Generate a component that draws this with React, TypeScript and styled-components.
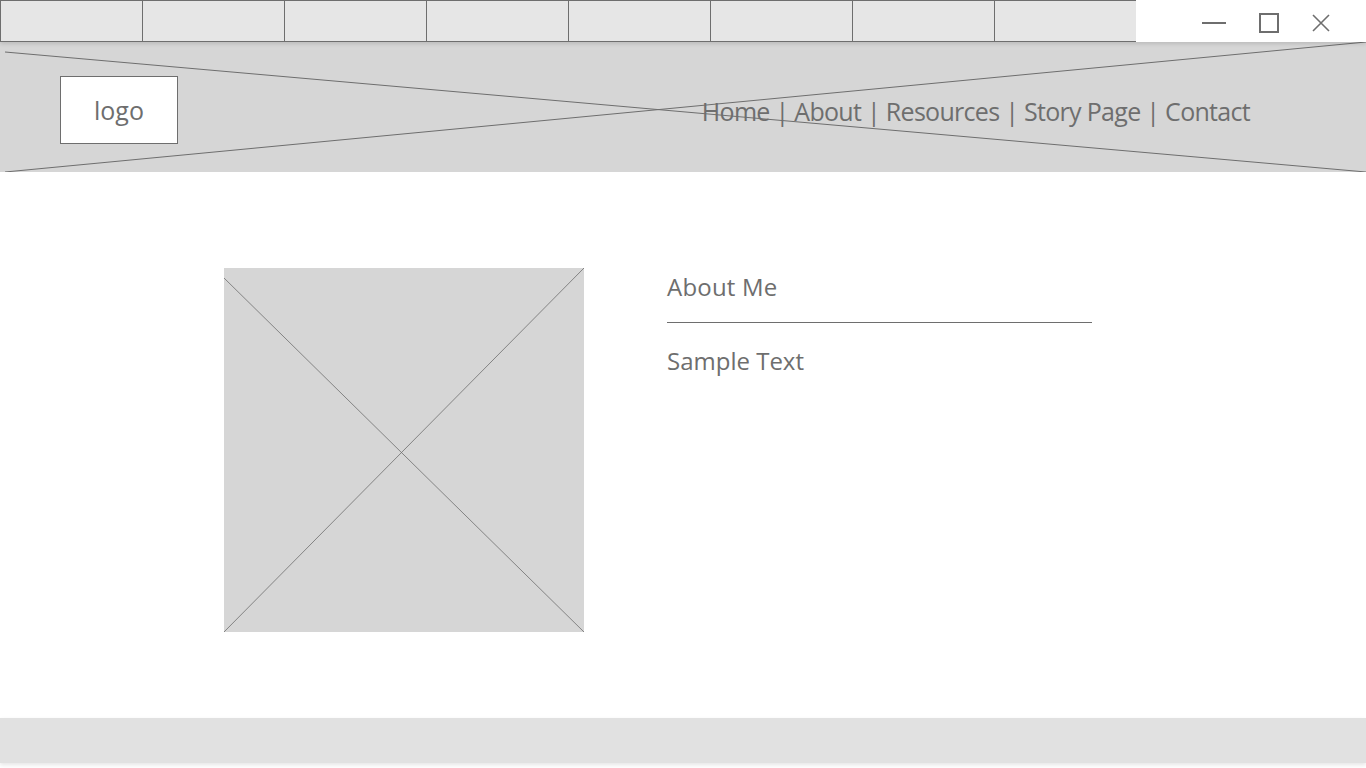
import styled, { createGlobalStyle } from 'styled-components'

const GlobalStyle = createGlobalStyle`
    html, body {
        margin: 0;
        padding: 0;
        background: #ffffff;
        font-family: "Open Sans", "Noto Sans", Arial, sans-serif;
        color: #6e6e6e;
    }
`;

const Page = styled.div`
    width: 1366px;
    height: 768px;
    display: flex;
    flex-direction: column;
    overflow: hidden;
    background: #ffffff;
`;

const TopBar = styled.div`
    height: 42px;
    display: flex;
    position: relative;
    z-index: 2;
    box-shadow: 0 2px 4px rgba(0, 0, 0, 0.12);
`;

const Tab = styled.div`
    width: 143px;
    height: 42px;
    box-sizing: border-box;
    background: #e6e6e6;
    border: 1px solid #6e6e6e;
    margin-right: -1px;
`;

const Controls = styled.div`
    flex: 1;
    display: flex;
    justify-content: flex-end;
    align-items: center;
    padding: 3px 28px 0 0;
    background: #ffffff;
`;

const ControlButton = styled.div<{ $space?: number }>`
    width: 34px;
    height: 38px;
    margin-left: ${props => props.$space ? props.$space + 'px' : '0'};
    display: flex;
    align-items: center;
    justify-content: center;
`;

const Header = styled.header`
    height: 130px;
    background: #d6d6d6;
    position: relative;
    display: flex;
    align-items: center;
    justify-content: space-between;
    padding: 0 116px 0 60px;
`;

const CrossLines = styled.svg`
    position: absolute;
    inset: 0;
    width: 100%;
    height: 100%;
    pointer-events: none;
`;

const LogoBox = styled.div`
    position: relative;
    width: 118px;
    height: 68px;
    box-sizing: border-box;
    background: #ffffff;
    border: 1px solid #6e6e6e;
    display: flex;
    align-items: center;
    justify-content: center;
    font-size: 25px;
    margin-top: 6px;
`;

const Nav = styled.nav`
    position: relative;
    font-size: 25px;
    letter-spacing: -0.7px;
    word-spacing: 0px;
    color: #6e6e6e;
    margin-top: 8px;
    white-space: nowrap;
`;

const Main = styled.main`
    flex: 1;
    display: flex;
    padding: 96px 0 0 224px;
    gap: 83px;
`;

const ImageBox = styled.div`
    width: 360px;
    height: 364px;
    background: #d6d6d6;
    position: relative;
`;

const TextColumn = styled.div`
    width: 425px;
    display: flex;
    flex-direction: column;
`;

const Heading = styled.div`
    font-size: 24px;
    line-height: 38px;
    letter-spacing: 0.2px;
    padding-bottom: 16px;
    border-bottom: 1px solid #6e6e6e;
`;

const Body = styled.div`
    font-size: 24px;
    line-height: 38px;
    padding-top: 19px;
`;

const Footer = styled.footer`
    height: 45px;
    background: #e1e1e1;
    margin-bottom: 5px;
    box-shadow: 0 2px 4px rgba(0, 0, 0, 0.1);
`;

export default function App() {
    const tabs = Array.from({ length: 8 });
    return (
        <Page>
            <GlobalStyle />
            <TopBar>
                {tabs.map((_, i) => (
                    <Tab key={i} />
                ))}
                <Controls>
                    <ControlButton>
                        <svg width="26" height="4" viewBox="0 0 26 4">
                            <line x1="1" y1="2" x2="25" y2="2" stroke="#6e6e6e" strokeWidth="2" />
                        </svg>
                    </ControlButton>
                    <ControlButton $space={21}>
                        <svg width="20" height="20" viewBox="0 0 20 20">
                            <rect x="1" y="1" width="18" height="18" fill="none" stroke="#6e6e6e" strokeWidth="2" />
                        </svg>
                    </ControlButton>
                    <ControlButton $space={18}>
                        <svg width="18" height="18" viewBox="0 0 18 18">
                            <path d="M1 1 L17 17 M17 1 L1 17" stroke="#6e6e6e" strokeWidth="1.6" />
                        </svg>
                    </ControlButton>
                </Controls>
            </TopBar>
            <Header>
                <CrossLines viewBox="0 0 1366 130" preserveAspectRatio="none">
                    <line x1="5" y1="10" x2="1366" y2="130" stroke="#6e6e6e" strokeWidth="1" />
                    <line x1="5" y1="130" x2="1366" y2="0" stroke="#6e6e6e" strokeWidth="1" />
                </CrossLines>
                <LogoBox>logo</LogoBox>
                <Nav>Home | About | Resources | Story Page | Contact</Nav>
            </Header>
            <Main>
                <ImageBox>
                    <CrossLines viewBox="0 0 360 364" preserveAspectRatio="none">
                        <line x1="0" y1="10" x2="360" y2="364" stroke="#6e6e6e" strokeWidth="0.8" />
                        <line x1="360" y1="0" x2="0" y2="364" stroke="#6e6e6e" strokeWidth="0.8" />
                    </CrossLines>
                </ImageBox>
                <TextColumn>
                    <Heading>About Me</Heading>
                    <Body>Sample Text</Body>
                </TextColumn>
            </Main>
            <Footer />
        </Page>
    );
}
